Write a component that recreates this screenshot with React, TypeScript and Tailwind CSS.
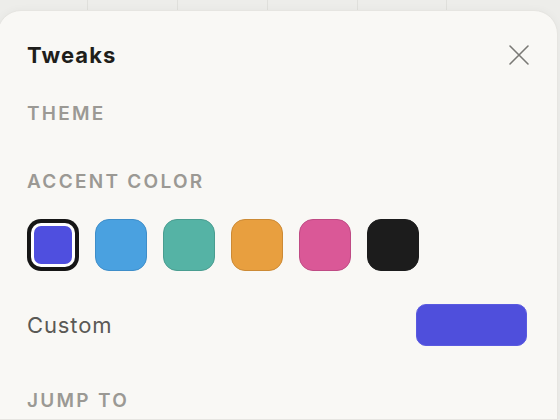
const swatches = [
  { bg: "bg-[#4f4fdf]", border: "border-[#3f3fbf]" },
  { bg: "bg-[#4aa1e0]", border: "border-[#3f8ec9]" },
  { bg: "bg-[#55b3a5]", border: "border-[#4a9d90]" },
  { bg: "bg-[#e89f3f]", border: "border-[#cc8a35]" },
  { bg: "bg-[#da5897]", border: "border-[#bf4b84]" },
  { bg: "bg-[#1c1c1c]", border: "border-[#1c1c1c]" },
];

export default function App() {
  return (
    <div
      className="w-[560px] h-[420px] overflow-hidden bg-[#ededea] flex flex-col"
      style={{ fontFamily: "Inter, 'Noto Sans', sans-serif" }}
    >
      {/* faint grid behind the sheet */}
      <div className="h-[10px] shrink-0 grid grid-cols-[88px_90px_90px_90px_89px_1fr]">
        <div className="border-r border-[#e0e0dc]" />
        <div className="border-r border-[#e0e0dc]" />
        <div className="border-r border-[#e0e0dc]" />
        <div className="border-r border-[#e0e0dc]" />
        <div className="border-r border-[#e0e0dc]" />
        <div />
      </div>
      <div className="ml-[-3px] w-[561px] flex-1 bg-[#f9f8f5] rounded-t-[24px] border border-[#e6e5e1] shadow-[0_0_8px_rgba(0,0,0,0.04)] pl-[29px] pr-[30px]">
        <div className="flex items-center justify-between pt-[30px]">
          <h1 className="text-[22px] font-bold tracking-[0.05em] text-[#1f1e1b] leading-[28px]">Tweaks</h1>
          <button className="text-[#7a7975] mr-[-3px]">
            <svg width="22" height="22" viewBox="0 0 22 22" fill="none" stroke="currentColor" strokeWidth="1.6" strokeLinecap="round">
              <path d="M2 2L20 20M20 2L2 20" />
            </svg>
          </button>
        </div>
        <div className="mt-[32px] text-[19px] font-semibold tracking-[0.12em] text-[#9b9994] leading-[26px]">THEME</div>
        <div className="mt-[42px] text-[19px] font-semibold tracking-[0.12em] text-[#9b9994] leading-[26px]">ACCENT COLOR</div>
        <div className="mt-[24px] flex gap-[16px]">
          <div className="w-[52px] h-[52px] rounded-[14px] bg-[#161616] p-[4px]">
            <div className="w-full h-full rounded-[10px] bg-white p-[3px]">
              <div className="w-full h-full rounded-[7px] bg-[#4f4fdf]" />
            </div>
          </div>
          {swatches.slice(1).map((s, i) => (
            <div key={i} className={`w-[52px] h-[52px] rounded-[14px] border ${s.bg} ${s.border}`} />
          ))}
        </div>
        <div className="mt-[33px] flex items-center justify-between">
          <span className="text-[22px] tracking-[0.04em] text-[#5a5955]">Custom</span>
          <div className="w-[111px] h-[42px] rounded-[10px] bg-[#4f4fdc] border border-[#5a5ae0]" />
        </div>
        <div className="mt-[42px] text-[19px] font-semibold tracking-[0.12em] text-[#9b9994] leading-[26px]">JUMP TO</div>
      </div>
    </div>
  );
}
